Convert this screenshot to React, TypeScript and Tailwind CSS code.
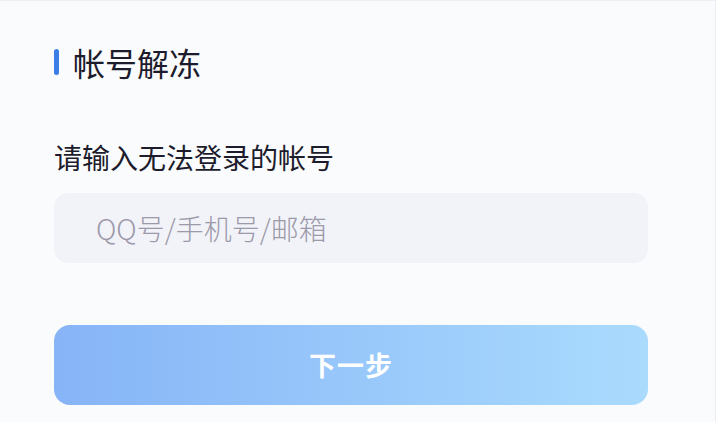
import { useState } from 'react';

const App = () => {
  const [account, setAccount] = useState('');

  return (
    <div
      className="h-[422px] w-full overflow-hidden bg-[#fafbfd] border-t border-r border-[#eceef3]"
      style={{ fontFamily: '"Noto Sans CJK SC", "Noto Sans", sans-serif' }}
    >
      <div className="pl-[54px] pr-[67px] pt-[41px]">
        {/* Title */}
        <div className="flex items-center gap-[14px] h-[40px]">
          <span className="w-[5px] h-[26px] rounded-sm bg-[#3b7fe6]" />
          <h1 className="text-[32px] leading-[40px] text-[#1d1c2c]">帐号解冻</h1>
        </div>

        {/* Label */}
        <p className="mt-[57px] text-[28px] leading-[36px] text-[#1d1c2c]">请输入无法登录的帐号</p>

        {/* Input */}
        <div className="mt-[18px] h-[70px] rounded-[14px] bg-[#f2f3f8] flex items-center pl-[42px]">
          <input
            value={account}
            onChange={(e) => setAccount(e.target.value)}
            placeholder="QQ号/手机号/邮箱"
            className="w-full bg-transparent outline-none text-[28px] font-light text-[#1d1c2c] placeholder:text-[#9c99aa]"
          />
        </div>

        {/* Next button */}
        <button className="mt-[62px] w-full h-[80px] rounded-[16px] bg-gradient-to-r from-[#86b4f7] to-[#aadbfd] text-white text-[27px] font-bold tracking-[1px] flex items-center justify-center">
          下一步
        </button>
      </div>
    </div>
  );
};

export default App;
